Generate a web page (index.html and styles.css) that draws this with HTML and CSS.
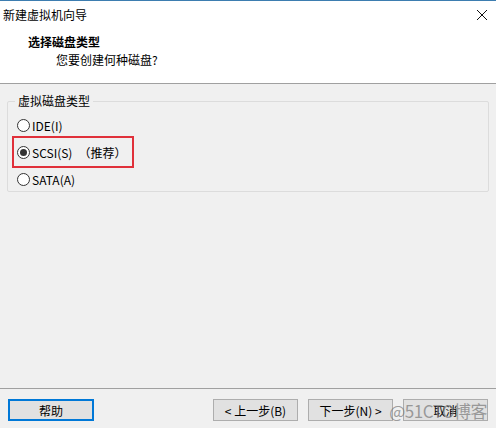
FILE: index.html
```html
<!DOCTYPE html>
<html lang="zh">
<head>
<meta charset="UTF-8">
<title>新建虚拟机向导</title>
<link rel="stylesheet" href="styles.css">
</head>
<body>
<div class="wizard">
  <div class="titlebar">
    <span class="title">新建虚拟机向导</span>
    <svg class="close" width="12" height="12" viewBox="0 0 12 12"><path d="M1 1L11 11M11 1L1 11" stroke="#111" stroke-width="1"/></svg>
  </div>
  <div class="header">
    <div class="h_main">选择磁盘类型</div>
    <div class="h_sub">您要创建何种磁盘?</div>
  </div>
  <div class="body">
    <fieldset class="group">
      <legend>虚拟磁盘类型</legend>
      <div class="opt"><span class="radio"></span>IDE(I)</div>
      <div class="opt mark"><span class="radio on"></span>SCSI(S)<span class="rec">（推荐）</span></div>
      <div class="opt"><span class="radio"></span>SATA(A)</div>
    </fieldset>
  </div>
  <div class="footer">
    <button class="btn help">帮助</button>
    <div class="nav">
      <button class="btn">&lt; 上一步(B)</button>
      <button class="btn">下一步(N) &gt;</button>
      <button class="btn">取消</button>
    </div>
    <span class="wm">@51CTO博客</span>
  </div>
</div>
</body>
</html>
```
FILE: styles.css
```css
* {
  box-sizing: border-box;
}
body {
  margin: 0;
  width: 496px;
  height: 428px;
  overflow: hidden;
  font-family: "Noto Sans CJK SC", "Microsoft YaHei", sans-serif;
  font-size: 12px;
  color: #000;
  background: #f0f0f0;
}
.wizard {
  display: flex;
  flex-direction: column;
  height: 428px;
}
.titlebar {
  height: 30px;
  border-top: 1px solid #3d7db0;
  background: #fff;
  display: flex;
  align-items: center;
  justify-content: space-between;
  padding: 0 8px 2px 3px;
}
.title {
  font-size: 12px;
}
.header {
  height: 54px;
  background: #fff;
  border-bottom: 1px solid #a0a0a0;
  padding: 3px 0 0 28px;
}
.h_main {
  font-weight: bold;
  line-height: 18px;
}
.h_sub {
  padding-left: 28px;
  line-height: 18px;
}
.body {
  flex: 1;
  padding: 10px 7px 0 7px;
}
.group {
  margin: 0;
  height: 98px;
  border: 1px solid #dcdcdc;
  border-radius: 2px;
  padding: 4px 0 0 6px;
}
.group legend {
  padding: 0 3px;
  margin-left: 1px;
  line-height: 14px;
}
.opt {
  display: flex;
  align-items: center;
  height: 26px;
  width: 118px;
  padding-left: 3px;
}
.opt.mark {
  outline: 2px solid #e0303a;
  height: 28px;
}
.rec {
  margin-left: 6px;
}
.radio {
  width: 13px;
  height: 13px;
  border: 1px solid #333;
  border-radius: 50%;
  background: #fff;
  margin-right: 2px;
  display: flex;
  align-items: center;
  justify-content: center;
}
.radio.on::after {
  content: "";
  width: 7px;
  height: 7px;
  border-radius: 50%;
  background: #333;
}
.footer {
  position: relative;
  border-top: 1px solid #a0a0a0;
  height: 40px;
  display: flex;
  justify-content: space-between;
  padding: 10px 8px 0 8px;
}
.nav {
  display: flex;
  gap: 10px;
}
.btn {
  font-family: inherit;
  font-size: 12px;
  width: 85px;
  height: 22px;
  background: #e1e1e1;
  border: 1px solid #adadad;
  padding: 0;
  color: #000;
}
.btn.help {
  width: 86px;
  border: 2px solid #0078d7;
}
.wm {
  position: absolute;
  right: 9px;
  top: 9px;
  font-size: 17px;
  color: rgba(120, 120, 120, 0.7);
  letter-spacing: -0.5px;
}
```
